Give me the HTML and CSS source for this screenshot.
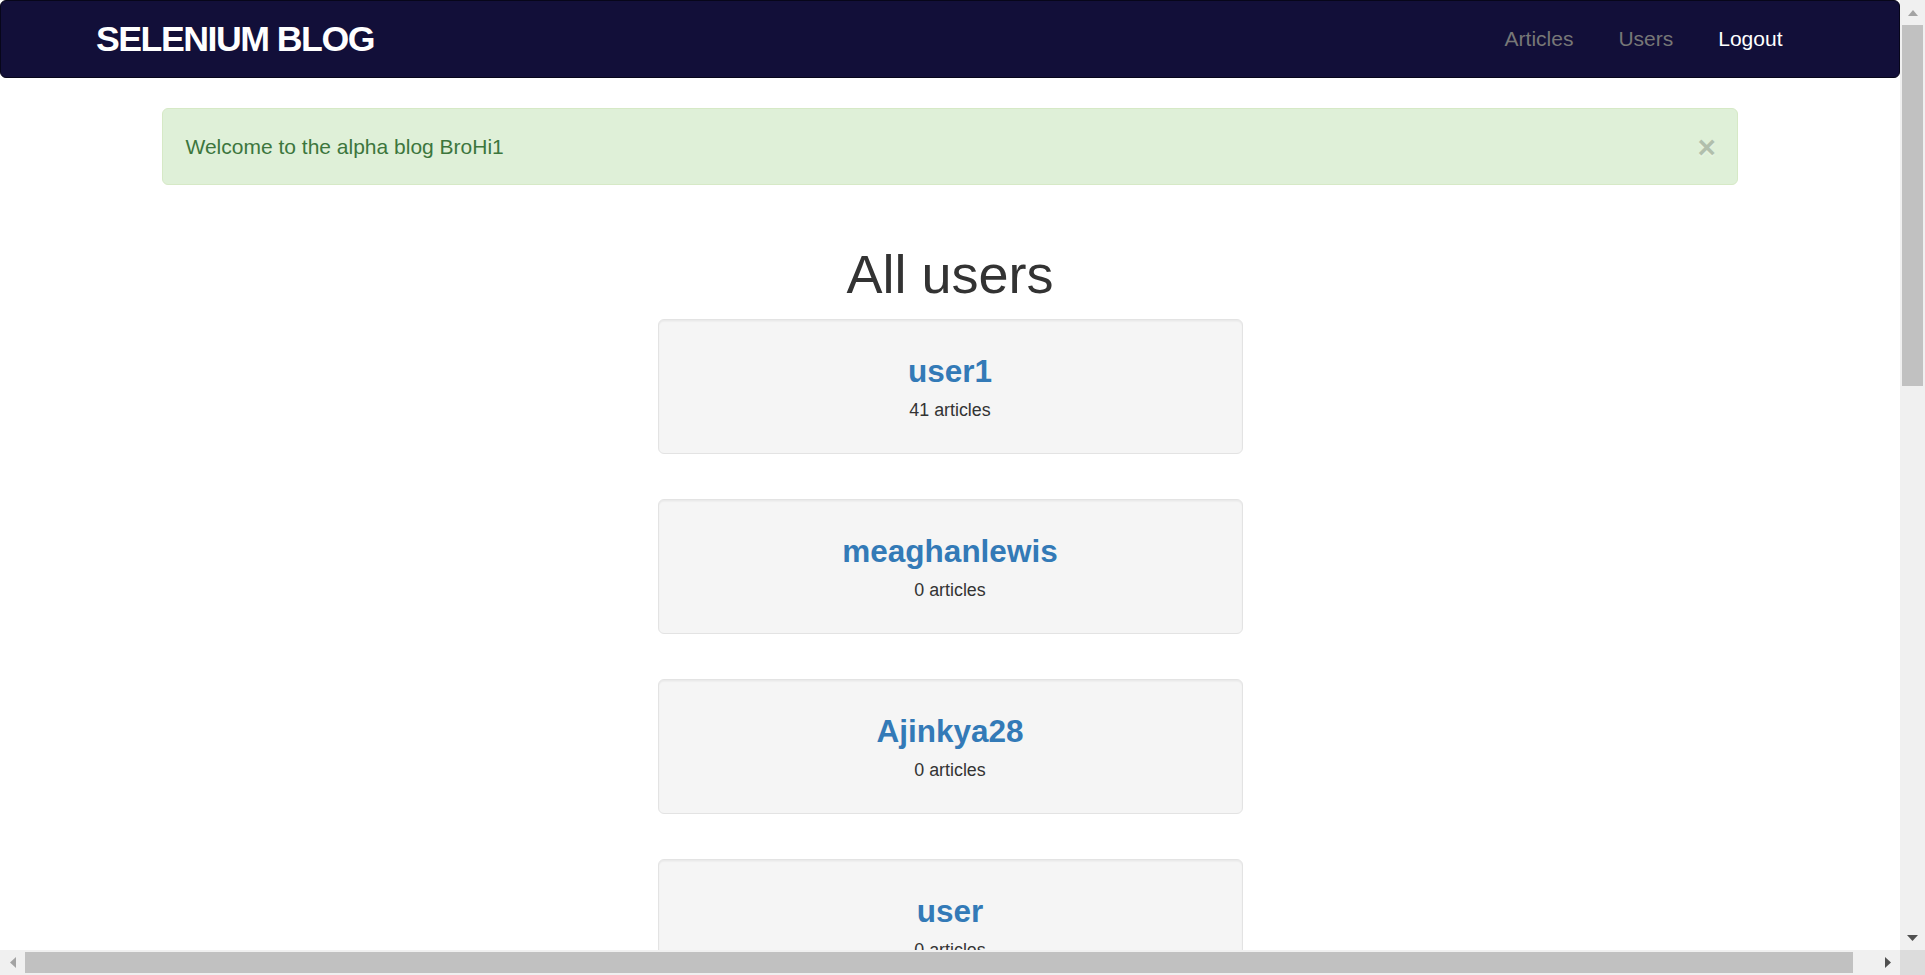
FILE: index.html
```html
<!DOCTYPE html>
<html lang="en">
<head>
<meta charset="utf-8">
<title>Selenium Blog - All users</title>
<link rel="stylesheet" href="styles.css">
</head>
<body>
<div class="window">
  <main class="viewport">
    <nav class="navbar">
      <div class="container nav-inner">
        <a class="brand" href="#">SELENIUM BLOG</a>
        <ul class="nav-links">
          <li><a class="nav-link" href="#">Articles</a></li>
          <li><a class="nav-link" href="#">Users</a></li>
          <li><a class="nav-link nav-link-active" href="#">Logout</a></li>
        </ul>
      </div>
    </nav>

    <div class="alert">
      <span class="alert-text">Welcome to the alpha blog BroHi1</span>
      <button class="close" type="button">&times;</button>
    </div>

    <h1 class="page-title">All users</h1>

    <div class="user-list">
      <ul class="listing">
        <li class="well">
          <div class="user-name"><a href="#">user1</a></div>
          <div class="user-count"><small>41 articles</small></div>
        </li>
      </ul>
      <ul class="listing">
        <li class="well">
          <div class="user-name"><a href="#">meaghanlewis</a></div>
          <div class="user-count"><small>0 articles</small></div>
        </li>
      </ul>
      <ul class="listing">
        <li class="well">
          <div class="user-name"><a href="#">Ajinkya28</a></div>
          <div class="user-count"><small>0 articles</small></div>
        </li>
      </ul>
      <ul class="listing">
        <li class="well">
          <div class="user-name"><a href="#">user</a></div>
          <div class="user-count"><small>0 articles</small></div>
        </li>
      </ul>
    </div>
  </main>

  <div class="vscroll">
    <div class="sb-btn">
      <svg width="10" height="6" viewBox="0 0 10 6"><polygon points="0,6 10,6 5,0" fill="#a3a3a3"/></svg>
    </div>
    <div class="vthumb"></div>
    <div class="sb-space"></div>
    <div class="sb-btn">
      <svg width="11" height="6" viewBox="0 0 11 6"><polygon points="0,0 11,0 5.5,6" fill="#505050"/></svg>
    </div>
  </div>

  <div class="hscroll">
    <div class="sb-btn">
      <svg width="6" height="11" viewBox="0 0 6 11"><polygon points="6,0 6,11 0,5.5" fill="#a3a3a3"/></svg>
    </div>
    <div class="hthumb"></div>
    <div class="sb-space"></div>
    <div class="sb-btn">
      <svg width="6" height="11" viewBox="0 0 6 11"><polygon points="0,0 0,11 6,5.5" fill="#505050"/></svg>
    </div>
  </div>

  <div class="sb-corner"></div>
</div>
</body>
</html>
```
FILE: styles.css
```css
* {
  box-sizing: border-box;
}

html,
body {
  margin: 0;
  height: 100%;
  overflow: hidden;
}

body {
  font-family: "Liberation Sans", Arial, Helvetica, sans-serif;
  font-size: 21px;
  line-height: 1.42857;
  color: #333;
  background: #fff;
}

a {
  text-decoration: none;
}

/* window with fake browser scrollbars */
.window {
  display: grid;
  grid-template-columns: 1fr 25px;
  grid-template-rows: 1fr 25px;
  height: 100vh;
  width: 100vw;
}

.viewport {
  overflow: hidden;
  min-width: 0;
  min-height: 0;
}

/* navbar */
.navbar {
  background: #120f39;
  border: 1px solid #07061a;
  border-radius: 6px;
  height: 78px;
  margin-bottom: 30px;
}

.container {
  width: 1755px;
  margin: 0 auto;
  padding: 0 22.5px;
}

.nav-inner {
  display: flex;
  justify-content: space-between;
  align-items: flex-start;
  height: 100%;
}

.brand {
  display: block;
  color: #fff;
  font-size: 35.7px;
  font-weight: bold;
  letter-spacing: -1.5px;
  line-height: 51px;
  padding-top: 12.5px;
  margin-left: 1px;
}

.nav-links {
  display: flex;
  list-style: none;
  margin: 0;
  padding: 0;
}

.nav-link {
  display: block;
  padding: 22.5px 22.5px;
  line-height: 30px;
  font-size: 21px;
  color: #777;
}

.nav-link-active {
  color: #fff;
}

/* alert */
.alert {
  display: flex;
  justify-content: space-between;
  align-items: flex-start;
  width: 1576px;
  margin: 0 auto;
  padding: 22.5px 52.5px 22.5px 22.5px;
  background: #dff0d8;
  border: 1.5px solid #d6e9c6;
  border-radius: 6px;
  color: #3c763d;
}

.close {
  margin-right: -31.5px;
  padding: 0;
  border: 0;
  background: transparent;
  font-family: "Liberation Sans", Arial, sans-serif;
  font-size: 31.5px;
  font-weight: bold;
  line-height: 30px;
  color: #000;
  opacity: 0.2;
  text-shadow: 0 1.5px 0 #fff;
}

/* title */
.page-title {
  margin: 60px 0 15px;
  font-size: 54px;
  font-weight: 500;
  line-height: 1.1;
  text-align: center;
  color: #333;
}

/* user cards */
.user-list {
  text-align: center;
}

.listing {
  display: flow-root;
  list-style: none;
  padding: 0;
  margin: 0 0 15px;
}

.well {
  width: 585px;
  margin: 0 auto 30px;
  padding: 28.5px;
  background: #f5f5f5;
  border: 1.5px solid #e3e3e3;
  border-radius: 6px;
  box-shadow: inset 0 1.5px 1.5px rgba(0, 0, 0, 0.05);
}

.user-name {
  font-size: 31.5px;
  font-weight: bold;
  line-height: 45px;
}

.user-name a {
  color: #337ab7;
}

.user-count {
  line-height: 30px;
}

.user-count small {
  font-size: 85%;
}

/* fake scrollbars */
.vscroll {
  display: flex;
  flex-direction: column;
  background: #f0f0f0;
}

.hscroll {
  display: flex;
  flex-direction: row;
  background: #f0f0f0;
}

.sb-btn {
  flex: 0 0 25px;
  width: 25px;
  height: 25px;
  display: flex;
  align-items: center;
  justify-content: center;
}

.vthumb {
  flex: 0 0 361px;
  margin: 0 2px;
  background: #c1c1c1;
}

.hthumb {
  flex: 0 0 1828px;
  margin: 2px 0;
  background: #c1c1c1;
}

.sb-space {
  flex: 1;
}

.sb-corner {
  background: #dcdcdc;
}
```
